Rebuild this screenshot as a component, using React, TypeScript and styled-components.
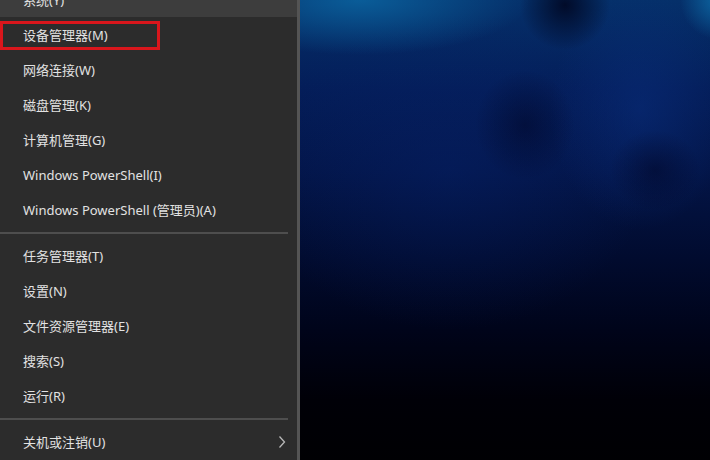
import React from "react";
import styled, { createGlobalStyle } from "styled-components";

const Global = createGlobalStyle`
  html, body { margin: 0; padding: 0; background: #000; }
  body { width: 710px; height: 460px; overflow: hidden; }
  #root { width: 710px; height: 460px; }
`;

const Screen = styled.div`
  display: flex;
  width: 710px;
  height: 460px;
  overflow: hidden;
  font-family: "Noto Sans", "Noto Sans CJK SC", sans-serif;
`;

const Menu = styled.nav`
  width: 297px;
  flex: none;
  height: 460px;
  background: #2c2c2c;
  border-right: 3px solid #545454;
  display: flex;
  flex-direction: column;
  overflow: hidden;
`;

const List = styled.div`
  margin-top: -18px;
  display: flex;
  flex-direction: column;
`;

const Item = styled.div<{ $hover?: boolean }>`
  position: relative;
  height: 35px;
  flex: none;
  display: flex;
  align-items: center;
  justify-content: space-between;
  padding: 0 11px 0 23px;
  font-size: 13px;
  color: #e2e2e2;
  white-space: nowrap;
  background: ${(p) => (p.$hover ? "#3d3d3d" : "transparent")};
`;

const Separator = styled.div`
  height: 11px;
  flex: none;
  display: flex;
  align-items: center;
  padding-right: 9px;
  &::after {
    content: "";
    display: block;
    width: 100%;
    height: 2px;
    background: #4e4e4e;
  }
`;

const Highlight = styled.span`
  position: absolute;
  left: 0;
  top: 4px;
  width: 160px;
  height: 29px;
  box-sizing: border-box;
  border: 3px solid #d9161c;
  pointer-events: none;
`;

const Chevron = styled.svg`
  width: 8px;
  height: 14px;
  flex: none;
`;

const Wallpaper = styled.div`
  flex: 1;
  height: 460px;
  background:
    radial-gradient(ellipse 40px 40px at 420px 0px, rgba(14, 110, 170, 0.9), rgba(14, 110, 170, 0) 100%),
    radial-gradient(ellipse 45px 45px at 265px 5px, rgba(0, 2, 25, 0.8), rgba(0, 2, 25, 0) 100%),
    radial-gradient(ellipse 170px 55px at 60px 0px, rgba(10, 95, 155, 0.95), rgba(10, 95, 155, 0) 100%),
    radial-gradient(ellipse 50px 55px at 225px 125px, rgba(0, 2, 30, 0.45), rgba(0, 2, 30, 0) 100%),
    radial-gradient(ellipse 45px 40px at 355px 170px, rgba(0, 2, 30, 0.45), rgba(0, 2, 30, 0) 100%),
    radial-gradient(ellipse 90px 120px at 340px 110px, rgba(10, 50, 135, 0.45), rgba(10, 50, 135, 0) 100%),
    radial-gradient(ellipse 200px 160px at 150px 170px, rgba(6, 35, 110, 0.4), rgba(6, 35, 110, 0) 100%),
    linear-gradient(180deg, #05306a 0px, #041d58 90px, #031548 170px, #010b2e 260px, #00041a 330px, #000007 400px, #000003 460px);
`;

type Entry = { label: string; hover?: boolean; marked?: boolean; more?: boolean } | "sep";

const entries: Entry[] = [
  { label: "系统(Y)", hover: true },
  { label: "设备管理器(M)", marked: true },
  { label: "网络连接(W)" },
  { label: "磁盘管理(K)" },
  { label: "计算机管理(G)" },
  { label: "Windows PowerShell(I)" },
  { label: "Windows PowerShell (管理员)(A)" },
  "sep",
  { label: "任务管理器(T)" },
  { label: "设置(N)" },
  { label: "文件资源管理器(E)" },
  { label: "搜索(S)" },
  { label: "运行(R)" },
  "sep",
  { label: "关机或注销(U)", more: true },
];

export default function App() {
  return (
    <>
      <Global />
      <Screen>
        <Menu>
          <List>
            {entries.map((e, i) =>
              e === "sep" ? (
                <Separator key={i} />
              ) : (
                <Item key={i} $hover={e.hover}>
                  <span>{e.label}</span>
                  {e.marked && <Highlight />}
                  {e.more && (
                    <Chevron viewBox="0 0 8 14">
                      <polyline points="1.5,1.5 6.5,7 1.5,12.5" fill="none" stroke="#b8b8b8" strokeWidth="1.3" />
                    </Chevron>
                  )}
                </Item>
              )
            )}
          </List>
        </Menu>
        <Wallpaper />
      </Screen>
    </>
  );
}
